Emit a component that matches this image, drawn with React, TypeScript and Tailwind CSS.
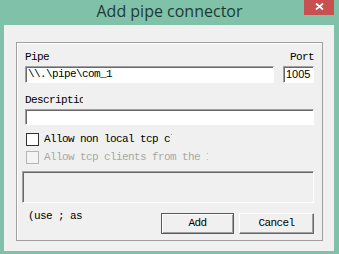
export default function App() {
  const mono = "font-['Liberation_Mono','DejaVu_Sans_Mono',monospace] text-[11px] tracking-[-0.6px] leading-[13px]";
  const sunken =
    "border border-t-[#a0a0a0] border-l-[#a0a0a0] border-b-[#ffffff] border-r-[#ffffff] shadow-[inset_1px_1px_0_#696969]";

  return (
    <div className="w-[339px] h-[254px] bg-[#7fc2a9] flex flex-col overflow-hidden">
      {/* title bar */}
      <div className="relative h-[25px] flex items-start justify-center">
        <span className="font-['Open_Sans','Noto_Sans',sans-serif] text-[16px] leading-[22px] text-[#1f3a33]">
          Add pipe connector
        </span>
        <div className="absolute top-0 right-[5px] w-[30px] h-[15px] bg-[#c75050] flex items-start justify-center pt-[3px]">
          <svg width="9" height="7" viewBox="0 0 9 7">
            <path d="M1 0.5 L8 6.5 M8 0.5 L1 6.5" stroke="#fff" strokeWidth="1.8" />
          </svg>
        </div>
      </div>

      {/* client area */}
      <div className="ml-[4px] w-[330px] h-[226px] bg-[#f0f0f0] pl-[12px] pt-[17px]">
        <div className="w-[307px] h-[199px] border border-[#a0a0a0] shadow-[inset_1px_1px_0_#ffffff] pl-[5px] pr-[8px] pt-[8px] flex flex-col">
          {/* pipe / port labels */}
          <div className={`flex justify-between h-[13px] ml-[3px] text-black ${mono}`}>
            <span>Pipe</span>
            <span>Port</span>
          </div>
          <div className="flex mt-[2px] ml-[3px] gap-[9px]">
            <div className={`w-[249px] h-[17px] bg-white ${sunken} pl-[2px] flex items-center`}>
              <span className={`${mono} text-black`}>\\.\pipe\com_1</span>
            </div>
            <div className={`w-[31px] h-[17px] bg-white ${sunken} pl-[2px] flex items-center overflow-hidden`}>
              <span className="font-['Liberation_Sans',Arial,sans-serif] text-[11px] leading-none text-black">1005</span>
            </div>
          </div>

          {/* description */}
          <div className={`mt-[11px] ml-[3px] h-[13px] w-[58px] overflow-hidden whitespace-nowrap text-black ${mono}`}>
            Description
          </div>
          <div className={`mt-[2px] ml-[3px] w-[289px] h-[16px] bg-white ${sunken}`} />

          {/* checkboxes */}
          <div className="mt-[8px] ml-[4px] flex items-center gap-[5px] h-[13px]">
            <div className="w-[13px] h-[13px] bg-white border border-[#333333]" />
            <div className={`w-[128px] overflow-hidden whitespace-nowrap text-black ${mono}`}>
              Allow non local tcp clients
            </div>
          </div>
          <div className="mt-[5px] ml-[4px] flex items-center gap-[5px] h-[13px]">
            <div className="w-[13px] h-[13px] bg-[#f4f4f4] border border-[#b5b5b5]" />
            <div className={`w-[164px] overflow-hidden whitespace-nowrap text-[#a8a8a8] ${mono}`}>
              Allow tcp clients from the Internet
            </div>
          </div>

          {/* disabled multi-line box */}
          <div className={`mt-[7px] w-[292px] h-[32px] ${sunken}`} />

          {/* bottom row */}
          <div className="mt-[7px] flex items-start">
            <span className={`ml-[6px] text-black ${mono}`}>(use ; as</span>
            <div className="ml-auto mt-[3px] flex gap-[5px]">
              <div className="w-[73px] h-[21px] border border-[#5a5a5a] shadow-[inset_1px_1px_0_#ffffff,inset_-1px_-1px_0_#a0a0a0] flex items-center justify-center">
                <span className={`text-black ${mono}`}>Add</span>
              </div>
              <div className="w-[75px] h-[21px] border border-t-[#ffffff] border-l-[#ffffff] border-b-[#696969] border-r-[#696969] shadow-[inset_-1px_-1px_0_#a0a0a0] flex items-center justify-center">
                <span className={`text-black ${mono}`}>Cancel</span>
              </div>
            </div>
          </div>
        </div>
      </div>
    </div>
  );
}
